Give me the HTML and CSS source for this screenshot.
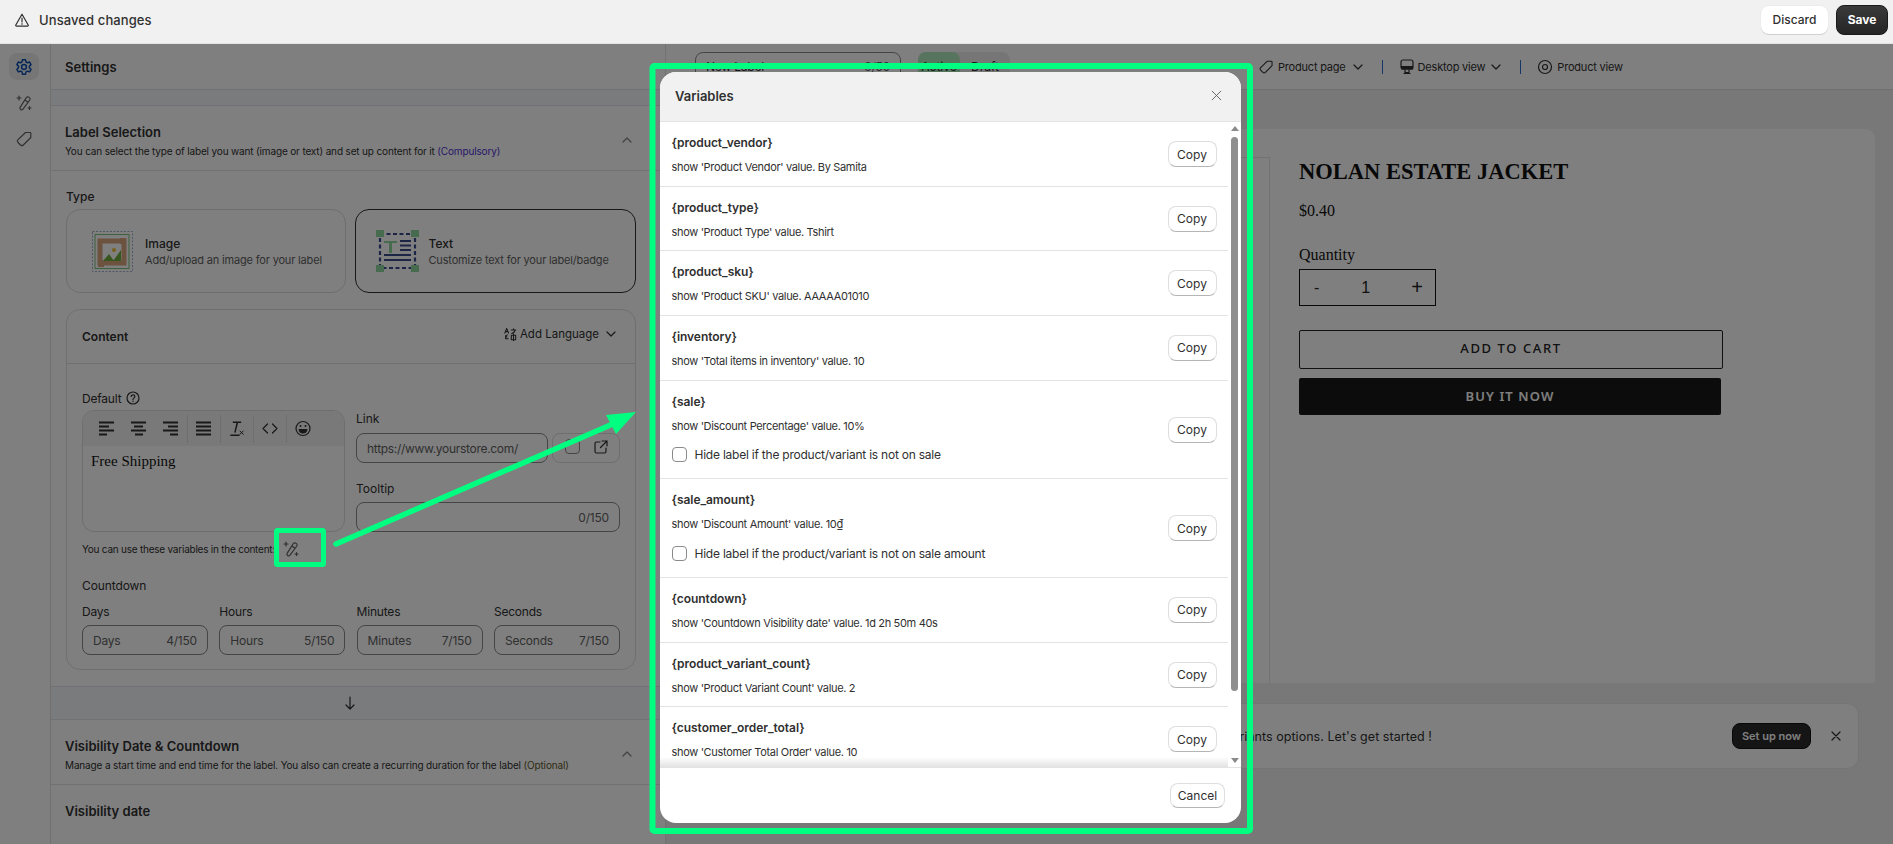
FILE: index.html
```html
<!DOCTYPE html>
<html lang="en">
<head>
<meta charset="utf-8">
<title>Label editor</title>
<link rel="stylesheet" href="styles.css">
</head>
<body>
<header class="topbar">
  <div class="topbar-status">
    <svg class="ic16" viewBox="0 0 16 16"><path d="M8 2.200 14.200 13a.8.8 0 0 1-.7 1.200h-11A.8.8 0 0 1 1.800 13z" class="st"/><path d="M8 6v4M8 11.700v.6" class="st"/></svg>
    <span>Unsaved changes</span>
  </div>
  <div class="topbar-actions">
    <button class="btn-discard">Discard</button>
    <button class="btn-save">Save</button>
  </div>
</header>

<div class="workspace">
  <nav class="rail">
    <div class="rail-item rail-active">
      <svg class="ic18 blue" viewBox="0 0 18 18"><path class="st" d="M7.500 1.800h3l.5 2.200 1.500.8 2.100-.8 1.400 2.600-1.600 1.500v1.700l1.600 1.500-1.400 2.600-2.100-.8-1.500.8-.5 2.300h-3l-.5-2.300-1.500-.8-2.100.8L1.900 11.300l1.600-1.500V8.100L1.900 6.600l1.400-2.600 2.100.8 1.500-.8z"/><circle class="st" cx="9" cy="9" r="2.400"/></svg>
    </div>
    <div class="rail-item rail-muted">
      <svg class="ic18" viewBox="0 0 18 18"><path class="st" d="M14 3.200a2 2 0 0 1 .8 2.800l-7 9.400a1.700 1.700 0 0 1-2.700-2L11.200 3.800a2 2 0 0 1 2.800-.6zM9.700 5.800l3.200 2.500"/><path class="st" d="M4 2v4M2 4h4M14.500 12.500v3M13 14h3"/></svg>
    </div>
    <div class="rail-item rail-muted">
      <svg class="ic18" viewBox="0 0 18 18"><path class="st" d="M10.500 2.500H15c.5 0 .8.3.8.8v4.200L8.300 15c-.8.8-2 .8-2.800 0L3 12.500c-.8-.8-.8-2 0-2.800z"/></svg>
    </div>
  </nav>

  <aside class="settings">
    <div class="settings-head">Settings</div>
    <div class="band band-s"></div>

    <section class="section-head">
      <div>
        <h2 class="section-title">Label Selection</h2>
        <p class="section-desc">You can select the type of label you want (image or text) and set up content for it <span class="violet">(Compulsory)</span></p>
      </div>
      <svg class="chev" viewBox="0 0 12 12"><path class="st" d="M2 8l4-4 4 4"/></svg>
    </section>

    <div class="section-body">
      <div class="type-label">Type</div>
      <div class="type-grid">
        <div class="type-card">
          <svg class="type-img" viewBox="0 0 41 41">
            <rect x=".5" y=".5" width="40" height="40" fill="none" stroke="#9db0c6" stroke-dasharray="2 1.500"/>
            <rect x="3" y="3.500" width="34" height="34" fill="#fff" stroke="#7fc07f"/>
            <path d="M8 10h24v22H8z" fill="none" stroke="#d6a77f" stroke-width="5"/>
            <rect x="28" y="7" width="6" height="6" fill="#d6a77f"/><rect x="6" y="30" width="6" height="6" fill="#d6a77f"/>
            <path d="M11 30l6-7 5 7zM21 30l8-11v11z" fill="#6fae3f"/>
            <circle cx="22" cy="19" r="2" fill="#f0c030"/>
          </svg>
          <div>
            <div class="type-name">Image</div>
            <div class="type-sub">Add/upload an image for your label</div>
          </div>
        </div>
        <div class="type-card type-card-on">
          <svg class="type-txt" viewBox="0 0 43 42">
            <rect x="4" y="4" width="35" height="34" fill="none" stroke="#3a4a8c" stroke-width="2.200" stroke-dasharray="4 2.500"/>
            <rect x="0" y="0" width="8" height="7" fill="#8fd69f"/><rect x="35" y="0" width="8" height="7" fill="#8fd69f"/>
            <rect x="0" y="35" width="8" height="7" fill="#8fd69f"/><rect x="35" y="35" width="8" height="7" fill="#8fd69f"/>
            <path d="M8 11h13v2H8zM13 11h3v12h-3z" fill="#8fd69f"/>
            <path d="M24 11h11M24 15.500h11M24 20h11M8 25h27M8 30h27" stroke="#3a4a8c" stroke-width="2.200"/>
          </svg>
          <div>
            <div class="type-name">Text</div>
            <div class="type-sub">Customize text for your label/badge</div>
          </div>
        </div>
      </div>

      <div class="content-card">
        <div class="content-head">
          <strong class="content-title">Content</strong>
          <div class="lang">
            <svg class="ic14" viewBox="0 0 16 16"><path class="st" d="M2 7 4.200 1.800 6.400 7M3 5.300h2.500M9.500 3.500h5M12 2v1.500M10 7.500c2-.8 3.500-2 4-4M3 10v3.500h3M5 9l-2 1 1.500 1.500M9.500 9.500h5v5h-5zM12 8v8"/></svg>
            <span>Add Language</span>
            <svg class="ic12" viewBox="0 0 12 12"><path class="st" d="M2 4l4 4 4-4"/></svg>
          </div>
        </div>
        <div class="content-body">
          <div class="default-label">Default
            <svg class="ic14" viewBox="0 0 14 14"><circle class="st" cx="7" cy="7" r="6"/><path class="st" d="M5.200 5.500c0-2.300 3.700-2.300 3.700 0 0 1.400-1.900 1.400-1.900 3M7 10v.6"/></svg>
          </div>
          <div class="editor-grid">
            <div class="editor-col">
              <div class="editor">
                <div class="editor-tools">
                  <svg class="tool" viewBox="0 0 16 14"><path class="st2" d="M0 1h15M0 5h10M0 9h15M0 13h8"/></svg>
                  <svg class="tool" viewBox="0 0 16 14"><path class="st2" d="M0 1h15M3 5h9M0 9h15M4 13h8"/></svg>
                  <svg class="tool" viewBox="0 0 16 14"><path class="st2" d="M0 1h15M5 5h10M0 9h15M7 13h8"/></svg>
                  <i class="sep"></i>
                  <svg class="tool" viewBox="0 0 16 14"><path class="st2" d="M0 1h15M0 5h15M0 9h15M0 13h15"/></svg>
                  <i class="sep"></i>
                  <svg class="tool" viewBox="0 0 16 18"><path class="st2" d="M3 1.500h10M8.500 1.500 5.500 14M0 17h11"/><path class="st" d="M11.500 12l4 4M15.500 12l-4 4"/></svg>
                  <i class="sep"></i>
                  <svg class="tool" viewBox="0 0 16 14"><path class="st" stroke-width="1.600" d="M5.500 2.500 1 7l4.500 4.500M10.500 2.500 15 7l-4.500 4.500"/></svg>
                  <i class="sep"></i>
                  <svg class="tool tool-lg" viewBox="0 0 16 16"><circle class="st" stroke-width="1.500" cx="8" cy="8" r="7"/><path d="M3.500 8.500h9c0 6-9 6-9 0z" fill="#303030"/><circle cx="5.500" cy="5.500" r="1" fill="#303030"/><circle cx="10.500" cy="5.500" r="1" fill="#303030"/></svg>
                </div>
                <div class="editor-area">Free Shipping</div>
              </div>
              <div class="hint">You can use these variables in the content:
                <svg class="ic18" viewBox="0 0 18 18"><path class="st" d="M14 3.200a2 2 0 0 1 .8 2.800l-7 9.400a1.700 1.700 0 0 1-2.700-2L11.200 3.800a2 2 0 0 1 2.800-.6zM9.700 5.800l3.200 2.500"/><path class="st" d="M4 2v4M2 4h4M14.500 12.500v3M13 14h3"/></svg>
              </div>
            </div>
            <div class="fields-col">
              <label class="field-label">Link</label>
              <div class="link-row">
                <div class="input link-input"><span class="ph">https://www.yourstore.com/</span></div>
                <div class="link-tools">
                  <i class="check"></i>
                  <svg class="ic14" viewBox="0 0 14 14"><path class="st" d="M6 2H2.500A1.500 1.500 0 0 0 1 3.500v8A1.500 1.500 0 0 0 2.500 13h8a1.500 1.500 0 0 0 1.500-1.500V8M8 1h5v5M13 1 6.500 7.500"/></svg>
                </div>
              </div>
              <label class="field-label tooltip-label">Tooltip</label>
              <div class="input input-end"><span class="ph">0/150</span></div>
            </div>
          </div>

          <div class="countdown-title">Countdown</div>
          <div class="countdown-grid">
            <div><div class="cd-label">Days</div><div class="input cd-input"><span class="ph">Days</span><span class="ph">4/150</span></div></div>
            <div><div class="cd-label">Hours</div><div class="input cd-input"><span class="ph">Hours</span><span class="ph">5/150</span></div></div>
            <div><div class="cd-label">Minutes</div><div class="input cd-input"><span class="ph">Minutes</span><span class="ph">7/150</span></div></div>
            <div><div class="cd-label">Seconds</div><div class="input cd-input"><span class="ph">Seconds</span><span class="ph">7/150</span></div></div>
          </div>
        </div>
      </div>
    </div>

    <div class="band band-l">
      <svg class="ic14" viewBox="0 0 14 14"><path class="st" d="M7 1v12M3 9l4 4 4-4"/></svg>
    </div>

    <section class="section-head">
      <div>
        <h2 class="section-title">Visibility Date &amp; Countdown</h2>
        <p class="section-desc">Manage a start time and end time for the label. You also can create a recurring duration for the label <span class="olive">(Optional)</span></p>
      </div>
      <svg class="chev" viewBox="0 0 12 12"><path class="st" d="M2 8l4-4 4 4"/></svg>
    </section>
    <div class="vis-date">Visibility date</div>
  </aside>

  <main class="preview">
    <div class="preview-bar">
      <div class="input name-input"><span>New Label</span><span class="ph">9/50</span></div>
      <div class="status-toggle"><span class="status-on">Active</span><span class="status-off">Draft</span></div>
      <div class="view-tools">
        <span class="view-item">
          <svg class="ic16" viewBox="0 0 18 18"><path class="st" d="M10.500 2.500H15c.5 0 .8.3.8.8v4.200L8.300 15c-.8.8-2 .8-2.800 0L3 12.500c-.8-.8-.8-2 0-2.800z"/></svg>
          Product page
          <svg class="ic12" viewBox="0 0 12 12"><path class="st" d="M2 4l4 4 4-4"/></svg>
        </span>
        <i class="view-sep"></i>
        <span class="view-item view-item-tight">
          <svg class="ic16" viewBox="0 0 16 16"><rect class="st" x="2" y="1" width="12" height="9" rx="2"/><path d="M2 7h12v3.500H2z" fill="#303030"/><path class="st" d="M6 10.500v3h4v-3M5 14.500h6"/></svg>
          Desktop view
          <svg class="ic12" viewBox="0 0 12 12"><path class="st" d="M2 4l4 4 4-4"/></svg>
        </span>
        <i class="view-sep"></i>
        <span class="view-item">
          <svg class="ic16" viewBox="0 0 16 16"><circle class="st" cx="8" cy="8" r="6.500"/><circle class="st" cx="8" cy="8" r="2.500"/></svg>
          Product view
        </span>
      </div>
    </div>

    <div class="stage">
      <div class="product-card">
        <div class="product-media"></div>
        <div class="product-info">
          <h1 class="product-title">NOLAN ESTATE JACKET</h1>
          <div class="product-price">$0.40</div>
          <div class="qty-label">Quantity</div>
          <div class="qty"><span class="qty-minus">-</span><span class="qty-val">1</span><span class="qty-plus">+</span></div>
          <button class="btn-cart">ADD TO CART</button>
          <button class="btn-buy">BUY IT NOW</button>
        </div>
      </div>
      <div class="banner">
        <span class="banner-text">, variants options. Let's get started !</span>
        <button class="btn-setup">Set up now</button>
        <svg class="ic12 banner-x" viewBox="0 0 12 12"><path class="st" d="M2 2l8 8M10 2l-8 8"/></svg>
      </div>
    </div>
  </main>
</div>

<div class="scrim"></div>

<div class="modal">
  <div class="modal-head">
    <strong class="modal-title">Variables</strong>
    <svg class="modal-x" viewBox="0 0 12 12"><path d="M1 1l10 10M11 1 1 11" stroke="#5c5f62" stroke-width="1" fill="none"/></svg>
  </div>
  <div class="modal-body">
    <div class="var-list">
      <div class="var-row"><div><div class="var-name">{product_vendor}</div><div class="var-desc">show 'Product Vendor' value. By Samita</div></div><button class="btn-copy">Copy</button></div>
      <div class="var-row"><div><div class="var-name">{product_type}</div><div class="var-desc">show 'Product Type' value. Tshirt</div></div><button class="btn-copy">Copy</button></div>
      <div class="var-row"><div><div class="var-name">{product_sku}</div><div class="var-desc">show 'Product SKU' value. AAAAA01010</div></div><button class="btn-copy">Copy</button></div>
      <div class="var-row"><div><div class="var-name">{inventory}</div><div class="var-desc">show 'Total items in inventory' value. 10</div></div><button class="btn-copy">Copy</button></div>
      <div class="var-row"><div><div class="var-name">{sale}</div><div class="var-desc">show 'Discount Percentage' value. 10%</div><div class="var-check"><i class="check"></i>Hide label if the product/variant is not on sale</div></div><button class="btn-copy">Copy</button></div>
      <div class="var-row"><div><div class="var-name">{sale_amount}</div><div class="var-desc">show 'Discount Amount' value. 10₫</div><div class="var-check"><i class="check"></i>Hide label if the product/variant is not on sale amount</div></div><button class="btn-copy">Copy</button></div>
      <div class="var-row"><div><div class="var-name">{countdown}</div><div class="var-desc">show 'Countdown Visibility date' value. 1d 2h 50m 40s</div></div><button class="btn-copy">Copy</button></div>
      <div class="var-row"><div><div class="var-name">{product_variant_count}</div><div class="var-desc">show 'Product Variant Count' value. 2</div></div><button class="btn-copy">Copy</button></div>
      <div class="var-row"><div><div class="var-name">{customer_order_total}</div><div class="var-desc">show 'Customer Total Order' value. 10</div></div><button class="btn-copy">Copy</button></div>
    </div>
    <div class="scrollbar">
      <i class="sb-up"></i>
      <i class="sb-thumb"></i>
      <i class="sb-down"></i>
    </div>
  </div>
  <div class="modal-foot"><button class="btn-cancel">Cancel</button></div>
</div>

<svg class="annotations" viewBox="0 0 1893 844">
  <rect x="652.500" y="66" width="597.500" height="765" rx="2" fill="none" stroke="#00ff80" stroke-width="6"/>
  <rect x="276.500" y="530.500" width="47" height="34" rx="1" fill="none" stroke="#00ff80" stroke-width="5"/>
  <path d="M336 544 622 420" stroke="#00ff80" stroke-width="5.500" stroke-linecap="round" fill="none"/>
  <path d="M636 412 606 415 616 434z" fill="#00ff80"/>
</svg>
</body>
</html>
```
FILE: styles.css
```css
* { box-sizing: border-box; }
html, body { margin: 0; height: 844px; overflow: hidden; }
body {
  font-family: Inter, "Noto Sans", "Liberation Sans", sans-serif;
  font-size: 12px;
  color: #303030;
  background: #f1f1f1;
  position: relative;
}
h1, h2, p { margin: 0; }
button { font-family: inherit; cursor: pointer; }
i { display: block; font-style: normal; }

.st { fill: none; stroke: #303030; stroke-width: 1.2; stroke-linecap: round; stroke-linejoin: round; }
.st2 { fill: none; stroke: #303030; stroke-width: 1.8; }
.blue .st { stroke: #0a4fb0; stroke-width: 1.5; }
.ic12 { width: 12px; height: 12px; flex: none; }
.ic14 { width: 14px; height: 14px; flex: none; }
.ic16 { width: 16px; height: 16px; flex: none; }
.ic18 { width: 18px; height: 18px; flex: none; }

/* top bar */
.topbar {
  position: relative;
  z-index: 3;
  height: 44px;
  background: #f1f1f1;
  border-bottom: 1px solid #e4e4e4;
  display: flex;
  align-items: center;
  justify-content: space-between;
  padding: 0 5px 4px 14px;
}
.topbar-status { display: flex; align-items: center; gap: 9px; font-size: 13px; font-weight: 500; letter-spacing: .1px; }
.topbar-actions { display: flex; align-items: center; gap: 8px; }
.btn-discard {
  width: 67px; height: 28px; background: #fff; border: 0; border-radius: 8px;
  font-size: 12px; font-weight: 500; color: #303030;
  box-shadow: 0 1px 0 #d0d0d0, 0 0 0 1px #ececec;
}
.btn-save {
  width: 52px; height: 30px; background: linear-gradient(#3a3a3a, #252525); border: 1px solid #1a1a1a;
  border-radius: 8px; color: #fff; font-size: 12px; font-weight: 700;
}

/* shell */
.workspace { display: flex; height: 800px; }
.rail {
  width: 51px; flex: none; background: #fff; border-right: 1px solid #e0e0e0;
  padding: 9px 0 0 9px; display: flex; flex-direction: column; gap: 9px;
}
.rail-item { width: 30px; height: 27px; border-radius: 8px; display: flex; align-items: center; justify-content: center; }
.rail-active { background: #ececec; }
.rail-muted .st { stroke: #616161; }

/* settings */
.settings { width: 615px; flex: none; background: #fff; border-right: 1px solid #e4e4e4; overflow: hidden; }
.settings-head {
  height: 46px; padding-left: 14px; display: flex; align-items: center;
  font-size: 13px; font-weight: 600; border-bottom: 1px solid #dfe3e8;
}
.band { background: #f4f6fa; border-bottom: 1px solid #dfe3e8; }
.band-s { height: 16px; }
.band-l { height: 34px; display: flex; align-items: center; justify-content: center; padding-right: 16px; border-top: 1px solid #dfe3e8; margin-top: 16px; }
.section-head {
  height: 65px; padding: 17px 32px 13px 14px; display: flex; justify-content: space-between; align-items: center;
  border-bottom: 1px solid #dfe3e8;
}
.section-title { font-size: 13px; font-weight: 600; line-height: 18px; }
.section-desc { font-size: 10px; line-height: 14px; margin-top: 3px; letter-spacing: -.15px; }
.violet { color: #4b2fd0; }
.olive { color: #5c5a2a; }
.chev { width: 12px; height: 12px; opacity: .6; }
.section-body { padding: 0 29px 0 15px; }
.type-label { padding-top: 18px; height: 38px; font-size: 12px; font-weight: 500; line-height: 16px; }
.type-grid { display: grid; grid-template-columns: 280px 281px; gap: 8.5px; }
.type-card {
  height: 84px; border: 1px solid #dcdcdc; border-radius: 14px;
  display: flex; align-items: center; gap: 12px; padding-left: 25px;
}
.type-card-on { border-color: #303030; padding-left: 20px; gap: 10px; }
.type-img { width: 41px; height: 41px; flex: none; }
.type-txt { width: 43px; height: 42px; flex: none; }
.type-name { font-size: 12px; font-weight: 500; line-height: 17px; padding-top: 1px; }
.type-sub { font-size: 11px; line-height: 17px; color: #616161; white-space: nowrap; letter-spacing: -.17px; }

.content-card { margin-top: 16px; border: 1px solid #dfdfdf; border-radius: 14px; height: 361px; }
.content-head {
  height: 54px; border-bottom: 1px solid #dfdfdf; display: flex; justify-content: space-between;
  padding: 0 18px 0 15px; align-items: center;
}
.content-title { font-size: 12px; font-weight: 600; }
.lang { display: flex; align-items: center; gap: 3px; font-size: 11.5px; margin-top: -5px; }
.lang .ic12 { margin-left: 3px; }
.content-body { padding: 24px 15px 0; }
.default-label { display: flex; align-items: center; gap: 5px; height: 20px; font-size: 12px; letter-spacing: -.2px; }
.editor-grid { display: flex; gap: 11px; margin-top: 2px; }
.editor-col { width: 263px; flex: none; }
.editor { height: 122px; border: 1px solid #dcdcdc; border-radius: 12px; overflow: hidden; }
.editor-tools {
  height: 35px; background: #f3f3f3; display: flex; align-items: center; padding-left: 16px;
}
.tool { width: 16px; height: 15px; flex: none; margin-right: 16px; }
.tool-lg { height: 17px; }
.sep { width: 1px; height: 28px; background: #dcdcdc; margin: 0 8px 0 -8px; }
.editor-area { padding: 6px 8px; font: 15px/18px "Liberation Serif", serif; color: #111; }
.hint { height: 34px; display: flex; align-items: center; gap: 7px; font-size: 10px; letter-spacing: -.23px; color: #303030; white-space: nowrap; }
.hint .st { stroke: #616161; }
.fields-col { flex: 1; min-width: 0; }
.field-label { display: block; font-size: 12px; line-height: 16px; margin-top: 1px; }
.tooltip-label { margin-top: 18px; }
.input {
  height: 30px; border: 1px solid #8a8a8a; border-radius: 8px; background: #fff; display: flex; align-items: center;
  padding: 0 10px; font-size: 12px; white-space: nowrap; letter-spacing: -.2px;
}
.ph { color: #616161; }
.link-row { display: flex; gap: 4px; margin-top: 6px; }
.link-input { width: 192px; flex: none; letter-spacing: -.3px; }
.link-tools {
  width: 68px; height: 30px; flex: none; border: 1px solid #dcdcdc; border-radius: 8px;
  display: flex; align-items: center; justify-content: space-between; padding: 0 11px 3px 12px;
}
.check { width: 15px; height: 15px; border: 1px solid #8a8a8a; border-radius: 4px; background: #fff; flex: none; }
.input-end { justify-content: flex-end; margin-top: 5px; }
.countdown-title { margin-top: 12px; font-size: 12px; line-height: 16px; letter-spacing: -.1px; }
.countdown-grid { display: grid; grid-template-columns: repeat(4, 126px); column-gap: 11.3px; margin-top: 10px; }
.cd-label { font-size: 12px; line-height: 16px; margin-bottom: 5px; letter-spacing: -.2px; }
.cd-input { justify-content: space-between; }
.vis-date { padding: 16px 14px; font-size: 13px; font-weight: 600; line-height: 20px; }

/* preview */
.preview { flex: 1; min-width: 0; }
.preview-bar {
  height: 46px; background: #fff; border-bottom: 1px solid #e0e0e0; display: flex; align-items: center;
  padding-left: 29px;
}
.name-input { width: 206px; justify-content: space-between; }
.status-toggle { margin-left: 17px; width: 92px; height: 30px; border-radius: 8px; background: #ededed; display: flex; align-items: center; }
.status-on { width: 42px; height: 30px; line-height: 30px; text-align: center; border-radius: 8px; background: #aee9be; }
.status-off { flex: 1; text-align: center; }
.view-tools { margin-left: 248px; display: flex; align-items: center; font-size: 11px; letter-spacing: -.2px; color: #303030; }
.view-item { display: flex; align-items: center; gap: 4px; white-space: nowrap; }
.view-item-tight { gap: 3px; }
.view-item .ic12 { margin-left: 2px; }
.view-sep { width: 1px; height: 14px; background: #2c6ecb; margin: 0 16px 0 18px; }
.stage { padding: 39px 18px 0 24px; }
.product-card { height: 554px; background: #fff; border-radius: 10px 10px 0 0; display: flex; padding-top: 28px; }
.product-media { flex: 1; border: 1px solid #e4e4e4; border-width: 1px 1px 0 0; }
.product-info { width: 605px; flex: none; padding: 1px 0 0 29px; font-family: "Liberation Serif", serif; color: #111; }
.product-title { font-size: 22.5px; line-height: 28px; font-weight: 700; }
.product-price { font-size: 16px; line-height: 18px; margin-top: 16px; }
.qty-label { font-size: 16px; line-height: 18px; margin-top: 26px; }
.qty {
  width: 137px; height: 37px; margin-top: 5px; border: 1px solid #111; display: flex; align-items: center;
  font: 16px "Liberation Sans", sans-serif; color: #222;
}
.qty-minus { margin-left: 14px; }
.qty-val { margin-left: 42px; }
.qty-plus { margin-left: 41px; font-size: 20px; font-weight: 300; }
.btn-cart, .btn-buy {
  display: block; font-family: "Noto Sans", "Liberation Sans", sans-serif; font-size: 13px; letter-spacing: 1.6px; font-weight: 500; padding: 0 0 3px;
}
.btn-cart { width: 424px; height: 39px; margin-top: 24px; background: transparent; border: 1px solid #222; border-radius: 2px; color: #222; }
.btn-buy { width: 422px; height: 37px; margin-top: 9px; background: #181818; border: 0; border-radius: 2px; color: #fff; letter-spacing: 1.1px; font-weight: 600; padding-bottom: 2px; }
.banner {
  margin: 20px 16px 0 0; height: 66px; background: #fff; border: 1px solid #e8e8e8; border-radius: 12px;
  display: flex; align-items: center; justify-content: flex-end; padding-right: 16px;
}
.banner-text { font-size: 12.5px; letter-spacing: .05px; margin-right: 300px; white-space: nowrap; }
.btn-setup {
  width: 79px; height: 26px; background: #2a2a2a; border: 1px solid #111; border-radius: 8px; color: #fff;
  font-size: 11px; font-weight: 600; padding: 0;
}
.banner-x { margin-left: 19px; }

/* overlays */
.scrim { position: absolute; left: 0; right: 0; top: 44px; bottom: 0; background: rgba(0, 0, 0, .5); z-index: 1; }
.annotations { position: absolute; left: 0; top: 0; width: 1893px; height: 844px; z-index: 5; pointer-events: none; }

.modal {
  position: absolute; left: 660px; top: 72px; width: 581px; height: 751px; z-index: 4;
  background: #fff; border-radius: 16px; overflow: hidden; display: flex; flex-direction: column;
}
.modal-head {
  height: 50px; flex: none; background: #f1f1f1; border-bottom: 1px solid #e3e3e3;
  display: flex; align-items: center; justify-content: space-between; padding: 0 19px 2px 15px;
}
.modal-title { font-size: 13px; font-weight: 600; }
.modal-x { width: 11px; height: 11px; }
.modal-body { flex: 1; min-height: 0; display: flex; }
.var-list { flex: 1; min-width: 0; overflow: hidden; position: relative; }
.var-list::after {
  content: ""; position: absolute; left: 0; right: 0; bottom: 0; height: 10px;
  background: linear-gradient(rgba(230,230,230,0), rgba(225,225,225,.95));
}
.var-row {
  display: flex; align-items: center; justify-content: space-between; padding: 12px 11.5px 9.67px;
  border-bottom: 1px solid #e3e3e3;
}
.var-name { font-size: 12px; font-weight: 600; line-height: 18px; letter-spacing: -.05px; }
.var-desc { font-size: 11px; line-height: 18px; margin-top: 6px; color: #303030; letter-spacing: -.33px; }
.var-check { display: flex; align-items: center; gap: 8px; height: 20px; margin: 10px 0 4px; font-size: 12px; letter-spacing: -.23px; }
.btn-copy {
  width: 49px; height: 26px; margin-top: -2px; background: #fff; border: 1px solid #dedede; border-bottom-color: #b5b5b5; border-radius: 8px;
  font-size: 12px; color: #303030; padding: 0; flex: none;
}
.scrollbar { width: 13px; flex: none; display: flex; flex-direction: column; align-items: center; padding: 4px 0; }
.sb-up { width: 0; height: 0; border: 4px solid transparent; border-top: 0; border-bottom: 5px solid #8a8a8a; }
.sb-down { width: 0; height: 0; border: 4px solid transparent; border-bottom: 0; border-top: 5px solid #8a8a8a; margin-top: auto; }
.sb-thumb { width: 7px; height: 554px; margin-top: 6px; border-radius: 4px; background: #8f8f8f; }
.modal-foot {
  height: 56px; flex: none; border-top: 1px solid #e3e3e3; display: flex; align-items: center; justify-content: flex-end; padding-right: 16px;
}
.btn-cancel {
  width: 55px; height: 25px; background: #fff; border: 1px solid #dedede; border-bottom-color: #b5b5b5; border-radius: 8px;
  font-size: 12px; color: #303030; padding: 0;
}
```
